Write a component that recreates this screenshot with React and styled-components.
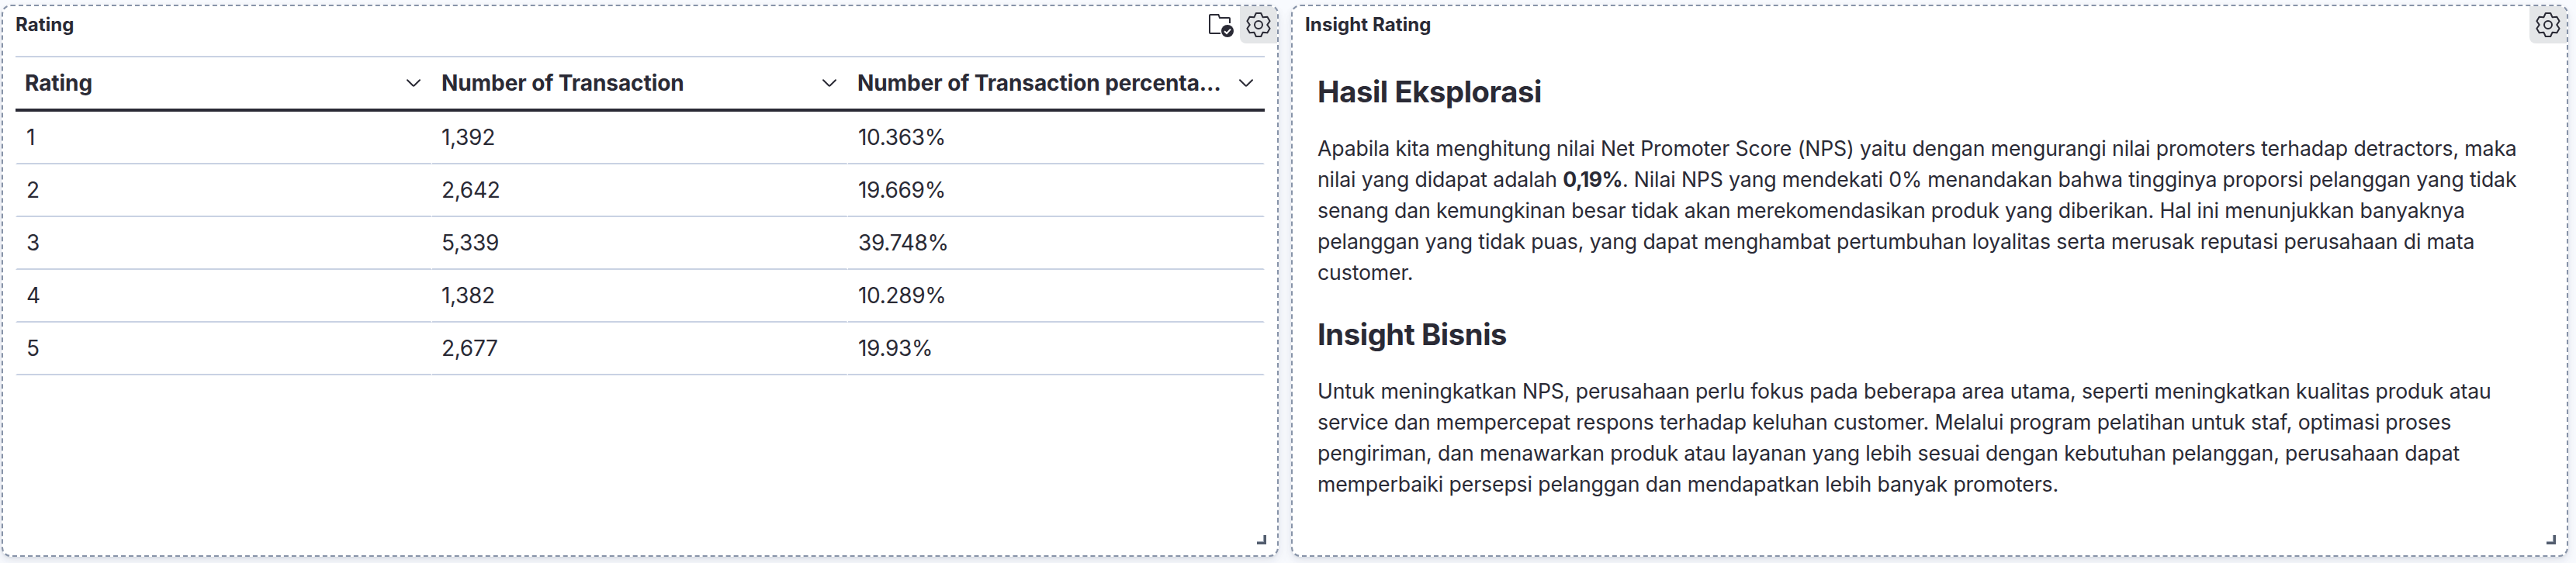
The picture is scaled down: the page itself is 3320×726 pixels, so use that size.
import React from 'react';
import styled, { createGlobalStyle, css } from 'styled-components';

const ink = '#2a2a35';
const line = '#c9d2e3';

const GlobalStyle = createGlobalStyle`
  * { box-sizing: border-box; }
  body {
    margin: 0;
    background: #f8fafe;
    color: ${ink};
    font-family: Inter, 'Liberation Sans', sans-serif;
    font-size: 28px;
  }
`;

const Dashboard = styled.main`
  display: grid;
  grid-template-columns: 1646px 1646px;
  gap: 16px;
  height: 726px;
  padding: 6px 10px 8px 2px;
  overflow: hidden;
`;

const PanelFrame = styled.section`
  position: relative;
  display: flex;
  flex-direction: column;
  background: #fff;
  border: 2px dashed #8793a8;
  border-radius: 12px;
  box-shadow: 0 1px 3px rgba(43, 57, 79, 0.1), 0 4px 8px rgba(43, 57, 79, 0.07),
    0 9px 20px rgba(43, 57, 79, 0.04);
`;

const PanelHeader = styled.header`
  display: flex;
  align-items: center;
  height: 48px;
  padding-left: 16px;
`;

const PanelTitle = styled.h2`
  flex: 1;
  margin: 0;
  font-size: 24px;
  line-height: 48px;
  font-weight: 700;
  letter-spacing: 0.1px;
`;

const HeaderButton = styled.button`
  display: flex;
  align-items: center;
  justify-content: center;
  width: 48px;
  height: 48px;
  padding: 0;
  border: 0;
  color: ${ink};
  background: ${(p) => (p.$active ? '#e4e6e8' : 'transparent')};
  border-radius: 0 ${(p) => (p.$active ? '10px' : '0')} 0 8px;
`;

const Icon = styled.svg`
  display: block;
  flex: none;
  fill: none;
  stroke: currentColor;
  stroke-width: 2;
`;

const ResizeHandle = styled.span`
  position: absolute;
  right: 14px;
  bottom: 14px;
  width: 12px;
  height: 12px;
  border: solid #535d6e;
  border-width: 0 3px 3px 0;
  box-shadow: inset -1px -1px 0 #98a1b0;
`;

const Table = styled.div`
  margin: 16px 16px 0;
  border-top: 2px solid ${line};
`;

const rowGrid = css`
  display: grid;
  grid-template-columns: 537px 536px 537px;
`;

const HeadRow = styled.div`
  ${rowGrid}
  height: 70px;
  border-bottom: 4px solid ${ink};
`;

const HeadCell = styled.div`
  display: flex;
  align-items: center;
  gap: 16px;
  min-width: 0;
  padding: 0 12px;
  font-weight: 700;
`;

const HeadLabel = styled.span`
  flex: 1;
  overflow: hidden;
  white-space: nowrap;
  text-overflow: ellipsis;
  letter-spacing: -0.08px;
`;

const BodyRow = styled.div`
  ${rowGrid}
  height: 68px;
`;

const Cell = styled.div`
  padding-left: 12px;
  line-height: 66px;
  letter-spacing: -0.3px;
  border: 0 solid transparent;
  border-width: 0 2px 2px 0;
  border-bottom-color: ${line};
  &:first-child { border-left-width: 2px; }
  &:last-child { padding-left: 13px; }
`;

const Markdown = styled.article`
  width: 1590px;
  padding: 38px 0 0 32px;
  font-size: 26.667px;
  line-height: 40px;
  letter-spacing: -0.005em;
`;

const Heading = styled.h1`
  margin: 0 0 29px;
  font-size: 38.2px;
  line-height: 48px;
  font-weight: 700;
  letter-spacing: -0.4px;
`;

const Paragraph = styled.p`
  margin: 0 0 36px;
`;

const Strong = styled.strong`
  font-weight: 700;
  letter-spacing: -0.6px;
`;

const gearPoints = [0, 60, 120, 180, 240, 300]
  .flatMap((deg) => {
    const a = (deg * Math.PI) / 180;
    return [[-5.5, -9.9], [-3.2, -15], [3.2, -15], [5.5, -9.9]].map(([x, y]) =>
      [16 + x * Math.cos(a) - y * Math.sin(a), 16 + x * Math.sin(a) + y * Math.cos(a)]
        .map((n) => n.toFixed(2))
        .join(',')
    );
  })
  .join(' ');

const GearIcon = () => (
  <Icon width="32" height="32" viewBox="0 0 32 32" strokeLinejoin="round">
    <polygon points={gearPoints} />
    <circle cx="16" cy="16" r="5" />
  </Icon>
);

const FolderCheckIcon = () => (
  <Icon width="32" height="32" viewBox="0 0 32 32">
    <path d="M15 27H2a1 1 0 0 1-1-1V4a1 1 0 0 1 1-1h10.4L14 7h12a1 1 0 0 1 1 1v6" />
    <circle cx="24" cy="24" r="8" fill="currentColor" stroke="none" />
    <path d="M20 24.2l3 2.8 5-5.4" stroke="#fff" />
  </Icon>
);

const ChevronIcon = () => (
  <Icon width="24" height="24" viewBox="0 0 24 24" strokeLinecap="round">
    <path d="M4 8.2l7.1 7.1a1.3 1.3 0 0 0 1.8 0L20 8.2" />
  </Icon>
);

const columns = ['Rating', 'Number of Transaction', 'Number of Transaction percentage'];
const rows = [
  ['1', '1,392', '10.363%'],
  ['2', '2,642', '19.669%'],
  ['3', '5,339', '39.748%'],
  ['4', '1,382', '10.289%'],
  ['5', '2,677', '19.93%'],
];

const Panel = ({ title, linked, children }) => (
  <PanelFrame>
    <PanelHeader>
      <PanelTitle>{title}</PanelTitle>
      {linked && <HeaderButton aria-label="Saved to library"><FolderCheckIcon /></HeaderButton>}
      <HeaderButton $active aria-label="Panel options"><GearIcon /></HeaderButton>
    </PanelHeader>
    {children}
    <ResizeHandle />
  </PanelFrame>
);

export default function App() {
  return (
    <>
      <GlobalStyle />
      <Dashboard>
        <Panel title="Rating" linked>
          <Table>
            <HeadRow>
              {columns.map((label) => (
                <HeadCell key={label}>
                  <HeadLabel>{label}</HeadLabel>
                  <ChevronIcon />
                </HeadCell>
              ))}
            </HeadRow>
            {rows.map((row) => (
              <BodyRow key={row[0]}>
                {row.map((value) => <Cell key={value}>{value}</Cell>)}
              </BodyRow>
            ))}
          </Table>
        </Panel>
        <Panel title="Insight Rating">
          <Markdown>
            <Heading>Hasil Eksplorasi</Heading>
            <Paragraph>
              Apabila kita menghitung nilai Net Promoter Score (NPS) yaitu dengan mengurangi nilai
              promoters terhadap detractors, maka nilai yang didapat adalah <Strong>0,19%</Strong>.
              Nilai NPS yang mendekati 0% menandakan bahwa tingginya proporsi pelanggan yang tidak
              senang dan kemungkinan besar tidak akan merekomendasikan produk yang diberikan. Hal
              ini menunjukkan banyaknya pelanggan yang tidak puas, yang dapat menghambat
              pertumbuhan loyalitas serta merusak reputasi perusahaan di mata customer.
            </Paragraph>
            <Heading>Insight Bisnis</Heading>
            <Paragraph>
              Untuk meningkatkan NPS, perusahaan perlu fokus pada beberapa area utama, seperti
              meningkatkan kualitas produk atau service dan mempercepat respons terhadap keluhan
              customer. Melalui program pelatihan untuk staf, optimasi proses pengiriman, dan
              menawarkan produk atau layanan yang lebih sesuai dengan kebutuhan pelanggan,
              perusahaan dapat memperbaiki persepsi pelanggan dan mendapatkan lebih banyak
              promoters.
            </Paragraph>
          </Markdown>
        </Panel>
      </Dashboard>
    </>
  );
}
